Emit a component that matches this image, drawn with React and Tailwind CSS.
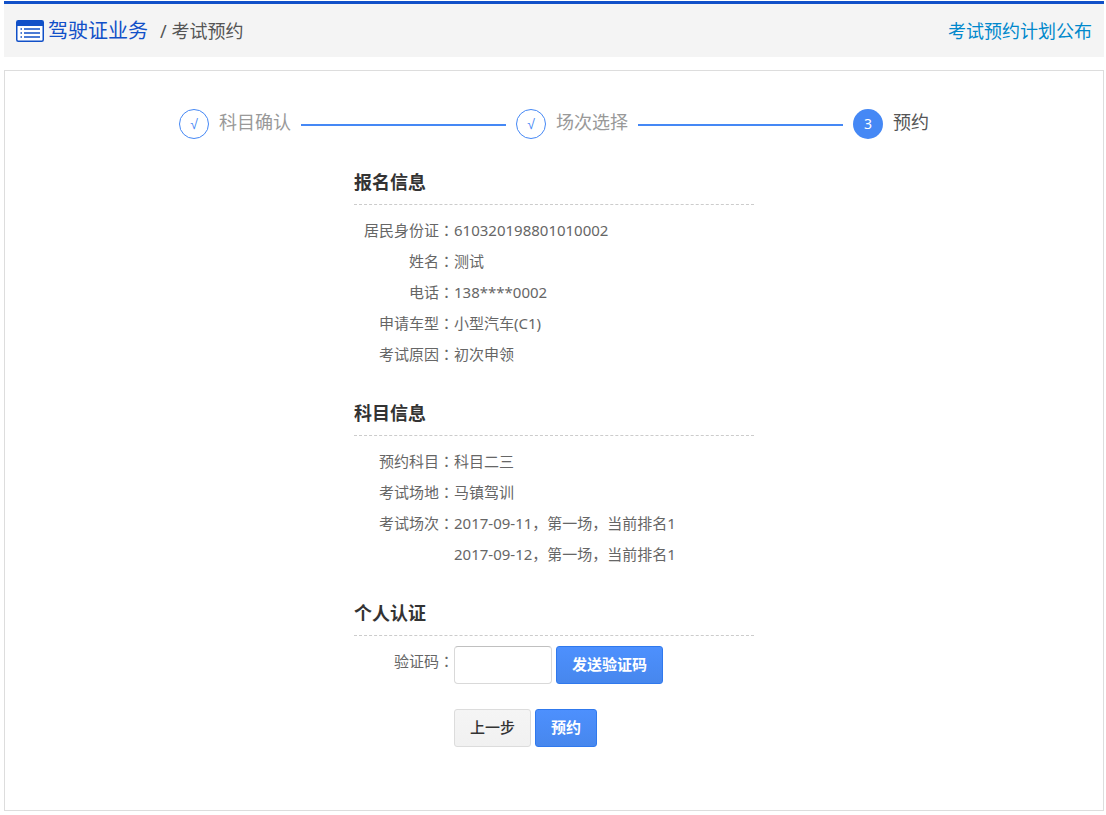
import { Fragment } from "react";

const steps = [
  { name: "科目确认", done: true },
  { name: "场次选择", done: true },
  { name: "预约", done: false },
];

const registration = [
  ["居民身份证", ["610320198801010002"]],
  ["姓名", ["测试"]],
  ["电话", ["138****0002"]],
  ["申请车型", ["小型汽车(C1)"]],
  ["考试原因", ["初次申领"]],
];

const subject = [
  ["预约科目", ["科目二三"]],
  ["考试场地", ["马镇驾训"]],
  ["考试场次", ["2017-09-11，第一场，当前排名1", "2017-09-12，第一场，当前排名1"]],
];

// Full-width colon, centred in its em box.
function Colon() {
  return (
    <span lang="ja" className="font-['Noto_Sans_CJK_JP',sans-serif] leading-none">
      ：
    </span>
  );
}

function ListIcon() {
  return (
    <svg width="28" height="22" viewBox="0 0 28 22" aria-hidden="true" className="shrink-0">
      <rect x="0.75" y="0.75" width="26.5" height="20.5" rx="1.5" fill="#fff" stroke="#1150c8" strokeWidth="1.5" />
      <path d="M1 1h26v5H1z" fill="#1150c8" />
      <path d="M4.5 9H6M4.5 13H6M4.5 17H6" stroke="#1150c8" strokeWidth="1.5" />
      <path d="M8 9h16M8 13h16M8 17h16" stroke="#1150c8" strokeWidth="1.5" />
    </svg>
  );
}

function Steps() {
  return (
    <ol className="mx-auto flex max-w-[750px] items-center gap-2.5">
      {steps.map((step, i) => (
        <Fragment key={step.name}>
          {i > 0 && <li aria-hidden="true" className="mt-0.5 h-0.5 flex-1 bg-[#4588f5]" />}
          <li
            aria-current={step.done ? undefined : "step"}
            className="flex items-start gap-2.5 whitespace-nowrap"
          >
            <span
              className={
                step.done
                  ? "flex size-[30px] items-center justify-center rounded-full border border-[#4588f5] font-['Liberation_Sans',sans-serif] text-sm text-[#4588f5]"
                  : "flex size-[30px] items-center justify-center rounded-full bg-[#4588f5] text-sm text-white"
              }
            >
              {step.done ? "√" : i + 1}
            </span>
            <span
              className={
                step.done
                  ? "text-lg leading-[26px] text-[#999]"
                  : "text-lg leading-[26px] text-[#555]"
              }
            >
              {step.name}
            </span>
          </li>
        </Fragment>
      ))}
    </ol>
  );
}

function Section({ title, children }) {
  return (
    <section className="mt-[23px]">
      <h2 className="border-b border-dashed border-[#ccc] pb-0.5 text-lg leading-10 font-bold text-[#333]">
        {title}
      </h2>
      <div className="pt-2.5">{children}</div>
    </section>
  );
}

function Details({ rows }) {
  return (
    <dl className="grid grid-cols-[100px_1fr] leading-[31px]">
      {rows.map(([label, values]) => (
        <Fragment key={label}>
          <dt className="text-right whitespace-nowrap">
            {label}
            <Colon />
          </dt>
          <dd>
            {values.map((value) => (
              <p key={value}>{value}</p>
            ))}
          </dd>
        </Fragment>
      ))}
    </dl>
  );
}

function Button({ primary, children }) {
  return (
    <button
      type="button"
      className={
        primary
          ? "h-[38px] rounded-[3px] border border-[#3079ed] bg-linear-to-b from-[#4d90fe] to-[#4787ed] px-[15px] pb-0.5 font-bold text-white"
          : "h-[38px] rounded-[3px] border border-[#dcdcdc] bg-linear-to-b from-[#f5f5f5] to-[#f1f1f1] px-[15px] pb-0.5 font-medium text-[#333]"
      }
    >
      {children}
    </button>
  );
}

export default function App() {
  return (
    <div className="bg-white pt-px pr-0.5 pb-1 pl-1 font-['Noto_Sans','Noto_Sans_CJK_SC',sans-serif] text-[15px] text-[#666]">
      <header className="flex items-center justify-between border-t-3 border-[#1150c8] bg-[#f4f4f4] px-3 pt-3 pb-[11px]">
        <div className="flex items-center">
          <ListIcon />
          <h1 className="ml-1 text-xl leading-[30px] text-[#1150c8]">驾驶证业务</h1>
          <span className="ml-3 text-lg leading-[30px] text-[#555]">/ 考试预约</span>
        </div>
        <a href="#plan" className="text-lg leading-[30px] text-[#0088cc]">
          考试预约计划公布
        </a>
      </header>

      <main className="mt-[13px] border border-[#ddd] px-4 pt-[38px] pb-[63px]">
        <Steps />
        <div className="mx-auto max-w-[400px]">
          <Section title="报名信息">
            <Details rows={registration} />
          </Section>
          <Section title="科目信息">
            <Details rows={subject} />
          </Section>
          <Section title="个人认证">
            <form className="grid grid-cols-[100px_1fr] gap-y-[25px]">
              <label htmlFor="code" className="text-right leading-[31px]">
                验证码
                <Colon />
              </label>
              <div className="flex gap-1">
                <input
                  id="code"
                  type="text"
                  className="h-[38px] w-[98px] rounded-[4px] border border-[#d9d9d9] border-t-[#c0c0c0] bg-white px-2"
                />
                <Button primary>发送验证码</Button>
              </div>
              <div className="col-start-2 flex gap-1">
                <Button>上一步</Button>
                <Button primary>预约</Button>
              </div>
            </form>
          </Section>
        </div>
      </main>
    </div>
  );
}
